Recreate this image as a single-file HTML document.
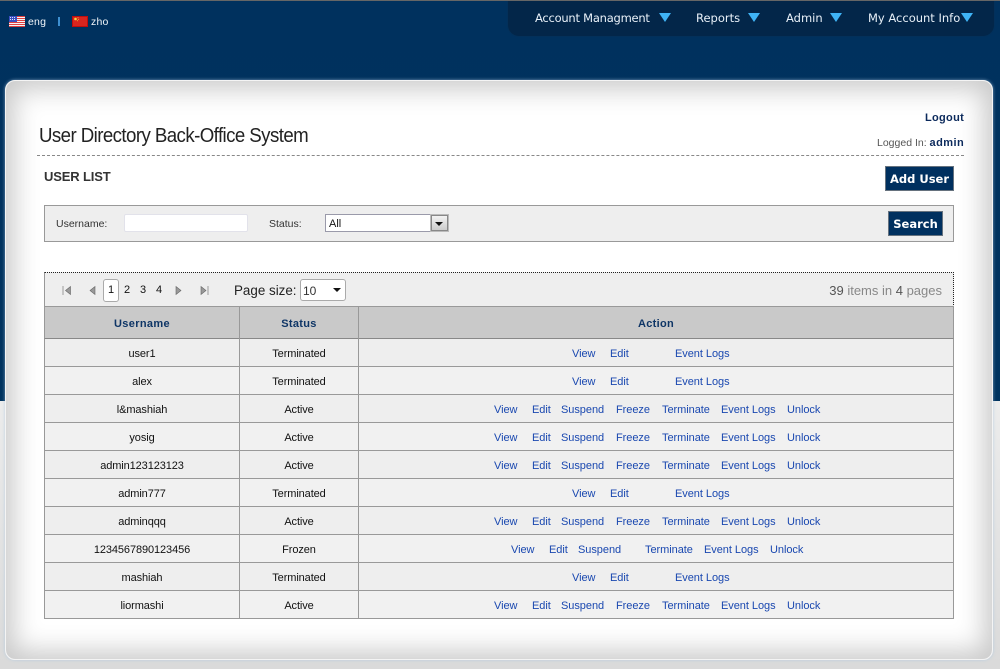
<!DOCTYPE html>
<html><head><meta charset="utf-8"><title>User List</title>
<style>
html,body{margin:0;padding:0;width:1000px;height:669px;overflow:hidden;background:#e0e0e0;font-family:"Liberation Sans",Arial,sans-serif}
*{box-sizing:border-box}
.a{position:absolute;white-space:nowrap}
#top{position:absolute;left:0;top:0;width:1000px;height:401px;background:linear-gradient(#00315e 0,#00335f 100%);border-top:1px solid #666}
#bot{position:absolute;left:0;top:401px;width:1000px;height:268px;background:linear-gradient(#ececec,#dadada)}
#nav{position:absolute;left:507px;top:1px;width:488px;height:36px;background:#032649;border-radius:0 0 12px 12px;border:1px solid #03305a;border-top:0}
.m{color:#e8f0f8;font:11.5px "DejaVu Sans",sans-serif;top:11px}
.tri{position:absolute;width:0;height:0;border-left:6px solid transparent;border-right:6px solid transparent;border-top:9px solid #3fb4f6;top:13px}
#card{position:absolute;left:5px;top:80px;width:988px;height:580px;background:#fff;border:1px solid #f4f4f4;border-radius:10px;box-shadow:0 0 3px rgba(170,200,225,.7),inset 0 0 26px 8px #c9c9c9}
.btn{position:absolute;background:#00305f;border:1px solid #66727e;color:#fff;font:bold 11.5px "DejaVu Sans",sans-serif;text-align:center}
.c{color:#111;font-size:11px;text-align:center;letter-spacing:-.1px;margin-top:2px}
.l{color:#1a48b0;font-size:11px;letter-spacing:-.05px;margin-top:2px}
.r{position:absolute;left:44px;width:910px;height:28px;border-bottom:1px solid #999;border-left:1px solid #999;border-right:1px solid #999}
.v{position:absolute;width:1px;background:#999;top:306px;height:313px}
.p{font-size:11px;color:#111;top:284px}
</style></head><body>
<div id="top"></div><div id="bot"></div>

<svg class="a" style="left:9px;top:16px" width="16" height="11" viewBox="0 0 16 11">
<rect width="16" height="11" fill="#f4f4f4"/>
<path d="M0 .5h16M0 2.500h16M0 4.500h16M0 6.500h16M0 8.500h16M0 10.500h16" stroke="#e04040" stroke-width="1"/>
<rect width="8" height="6" fill="#3a4fc0"/>
<path d="M1 1.500h6M1 3.500h6" stroke="#dfe4ff" stroke-width="1" stroke-dasharray="1 1"/>
</svg>
<div class="a" style="left:28px;top:16px;color:#f2f6fa;font-size:10.5px;letter-spacing:.2px">eng</div>
<div class="a" style="left:58px;top:17px;width:2px;height:9px;background:#3d8fd0"></div>
<svg class="a" style="left:72px;top:16px" width="16" height="11" viewBox="0 0 16 11">
<rect width="16" height="11" fill="#c00d0d"/><rect x="1" y="1" width="14" height="9" fill="#d8251f"/>
<circle cx="3.500" cy="3" r="1.300" fill="#f5d63d"/><circle cx="6" cy="1.700" r=".5" fill="#f5d63d"/><circle cx="6.600" cy="3.400" r=".5" fill="#f5d63d"/><circle cx="5.400" cy="4.800" r=".5" fill="#f5d63d"/>
</svg>
<div class="a" style="left:91px;top:16px;color:#f2f6fa;font-size:10.5px;letter-spacing:.2px">zho</div>

<div id="nav"></div>
<div class="a m" style="left:535px;letter-spacing:-.24px">Account Managment</div><div class="tri" style="left:659px"></div>
<div class="a m" style="left:696px">Reports</div><div class="tri" style="left:748px"></div>
<div class="a m" style="left:786px">Admin</div><div class="tri" style="left:830px"></div>
<div class="a m" style="left:868px">My Account Info</div><div class="tri" style="left:961px"></div>

<div id="card"></div>

<div class="a" style="left:925px;top:112px;color:#0c2a5c;font-size:11px;font-weight:bold;letter-spacing:.3px">Logout</div>
<div class="a" style="left:877px;top:137px;color:#555;font-size:10.5px">Logged In: <b style="color:#0c2a5c;font-size:11px;letter-spacing:.45px">admin</b></div>
<div class="a" style="left:39px;top:125px;color:#222;font-size:20px;letter-spacing:-.62px;transform:scaleX(.934);transform-origin:0 0">User Directory Back-Office System</div>
<div class="a" style="left:37px;top:155px;width:927px;border-top:1px dashed #888"></div>

<div class="a" style="left:44px;top:169px;color:#333;font-size:13px;font-weight:bold;letter-spacing:-.15px">USER LIST</div>
<div class="btn" style="left:885px;top:166px;width:69px;height:25px;line-height:25px">Add User</div>

<div class="a" style="left:44px;top:205px;width:910px;height:37px;background:#eee;border:1px solid #999"></div>
<div class="a" style="left:56px;top:217px;color:#333;font-size:10.5px;margin-top:1px">Username:</div>
<div class="a" style="left:124px;top:214px;width:124px;height:18px;background:#fff;border:1px solid #e2e2ea;border-radius:2px"></div>
<div class="a" style="left:269px;top:217px;color:#333;font-size:10.5px;margin-top:1px">Status:</div>
<div class="a" style="left:325px;top:214px;width:124px;height:18px;background:#fff;border:1px solid #9a9aaa"></div>
<div class="a" style="left:329px;top:218px;color:#111;font-size:11px">All</div>
<div class="a" style="left:431px;top:215px;width:17px;height:16px;background:linear-gradient(#f2f2f2,#ccc);border:1px solid #888;outline:1px solid #bbb"></div>
<div class="a" style="left:435px;top:222px;width:0;height:0;border-left:4px solid transparent;border-right:4px solid transparent;border-top:4px solid #111"></div>
<div class="btn" style="left:888px;top:211px;width:55px;height:25px;line-height:25px">Search</div>

<div class="a" style="left:44px;top:272px;width:910px;height:35px;background:#eee;border-top:1px dotted #222;border-right:1px dotted #222;border-left:1px solid #999"></div>
<svg class="a" style="left:60px;top:284px" width="160" height="13" viewBox="0 0 160 13">
<g fill="#999" stroke="#666" stroke-width=".6">
<path d="M3 2v9" fill="none"/><path d="M10.500 2.500v8L5.500 6.500z"/>
<path d="M35 2.500v8L30 6.500z"/>
<path d="M116 2.500v8l5-4z"/>
<path d="M141 2.500v8l5-4z"/><path d="M148 2v9" fill="none"/>
</g></svg>
<div class="a" style="left:103px;top:279px;width:16px;height:23px;background:#fff;border:1px solid #aaa;border-radius:3px"></div>
<div class="a p" style="left:108px">1</div>
<div class="a p" style="left:124px">2</div>
<div class="a p" style="left:140px">3</div>
<div class="a p" style="left:156px">4</div>
<div class="a" style="left:234px;top:283px;color:#222;font-size:13.4px">Page size:</div>
<div class="a" style="left:300px;top:279px;width:46px;height:22px;background:#fff;border:1px solid #aaa;border-radius:3px"></div>
<div class="a" style="left:303px;top:284px;color:#333;font-size:12px">10</div>
<div class="a" style="left:333px;top:288px;width:0;height:0;border-left:4px solid transparent;border-right:4px solid transparent;border-top:4px solid #111"></div>
<div class="a" style="right:58px;top:283px;color:#888;font-size:13px"><span style="color:#555">39</span> items in <span style="color:#555">4</span> pages</div>

<div class="a" style="left:44px;top:306px;width:910px;height:33px;background:#c9c9c9;border:1px solid #999;border-bottom-color:#888"></div>
<div class="a c" style="left:45px;width:194px;top:316px;color:#0e3566;font-weight:bold;letter-spacing:.35px">Username</div>
<div class="a c" style="left:240px;width:118px;top:316px;color:#0e3566;font-weight:bold;letter-spacing:.3px">Status</div>
<div class="a c" style="left:359px;width:594px;top:316px;color:#0e3566;font-weight:bold;letter-spacing:.3px">Action</div>

<div class="r" style="top:339px;background:#eee"></div>
<div class="r" style="top:367px;background:#f1f1f1"></div>
<div class="r" style="top:395px;background:#eee"></div>
<div class="r" style="top:423px;background:#f1f1f1"></div>
<div class="r" style="top:451px;background:#eee"></div>
<div class="r" style="top:479px;background:#f1f1f1"></div>
<div class="r" style="top:507px;background:#eee"></div>
<div class="r" style="top:535px;background:#f1f1f1"></div>
<div class="r" style="top:563px;background:#eee"></div>
<div class="r" style="top:591px;background:#f1f1f1"></div>
<div class="v" style="left:239px"></div><div class="v" style="left:358px"></div>

<div class="a c" style="left:45px;width:194px;top:346px">user1</div><div class="a c" style="left:240px;width:118px;top:346px">Terminated</div>
<div class="a l" style="left:572px;top:346px">View</div><div class="a l" style="left:610px;top:346px">Edit</div><div class="a l" style="left:675px;top:346px">Event Logs</div>

<div class="a c" style="left:45px;width:194px;top:374px">alex</div><div class="a c" style="left:240px;width:118px;top:374px">Terminated</div>
<div class="a l" style="left:572px;top:374px">View</div><div class="a l" style="left:610px;top:374px">Edit</div><div class="a l" style="left:675px;top:374px">Event Logs</div>

<div class="a c" style="left:45px;width:194px;top:402px">l&amp;mashiah</div><div class="a c" style="left:240px;width:118px;top:402px">Active</div>
<div class="a l" style="left:494px;top:402px">View</div><div class="a l" style="left:532px;top:402px">Edit</div><div class="a l" style="left:561px;top:402px">Suspend</div><div class="a l" style="left:616px;top:402px">Freeze</div><div class="a l" style="left:662px;top:402px">Terminate</div><div class="a l" style="left:721px;top:402px">Event Logs</div><div class="a l" style="left:787px;top:402px">Unlock</div>

<div class="a c" style="left:45px;width:194px;top:430px">yosig</div><div class="a c" style="left:240px;width:118px;top:430px">Active</div>
<div class="a l" style="left:494px;top:430px">View</div><div class="a l" style="left:532px;top:430px">Edit</div><div class="a l" style="left:561px;top:430px">Suspend</div><div class="a l" style="left:616px;top:430px">Freeze</div><div class="a l" style="left:662px;top:430px">Terminate</div><div class="a l" style="left:721px;top:430px">Event Logs</div><div class="a l" style="left:787px;top:430px">Unlock</div>

<div class="a c" style="left:45px;width:194px;top:458px">admin123123123</div><div class="a c" style="left:240px;width:118px;top:458px">Active</div>
<div class="a l" style="left:494px;top:458px">View</div><div class="a l" style="left:532px;top:458px">Edit</div><div class="a l" style="left:561px;top:458px">Suspend</div><div class="a l" style="left:616px;top:458px">Freeze</div><div class="a l" style="left:662px;top:458px">Terminate</div><div class="a l" style="left:721px;top:458px">Event Logs</div><div class="a l" style="left:787px;top:458px">Unlock</div>

<div class="a c" style="left:45px;width:194px;top:486px">admin777</div><div class="a c" style="left:240px;width:118px;top:486px">Terminated</div>
<div class="a l" style="left:572px;top:486px">View</div><div class="a l" style="left:610px;top:486px">Edit</div><div class="a l" style="left:675px;top:486px">Event Logs</div>

<div class="a c" style="left:45px;width:194px;top:514px">adminqqq</div><div class="a c" style="left:240px;width:118px;top:514px">Active</div>
<div class="a l" style="left:494px;top:514px">View</div><div class="a l" style="left:532px;top:514px">Edit</div><div class="a l" style="left:561px;top:514px">Suspend</div><div class="a l" style="left:616px;top:514px">Freeze</div><div class="a l" style="left:662px;top:514px">Terminate</div><div class="a l" style="left:721px;top:514px">Event Logs</div><div class="a l" style="left:787px;top:514px">Unlock</div>

<div class="a c" style="left:45px;width:194px;top:542px">1234567890123456</div><div class="a c" style="left:240px;width:118px;top:542px">Frozen</div>
<div class="a l" style="left:511px;top:542px">View</div><div class="a l" style="left:549px;top:542px">Edit</div><div class="a l" style="left:578px;top:542px">Suspend</div><div class="a l" style="left:645px;top:542px">Terminate</div><div class="a l" style="left:704px;top:542px">Event Logs</div><div class="a l" style="left:770px;top:542px">Unlock</div>

<div class="a c" style="left:45px;width:194px;top:570px">mashiah</div><div class="a c" style="left:240px;width:118px;top:570px">Terminated</div>
<div class="a l" style="left:572px;top:570px">View</div><div class="a l" style="left:610px;top:570px">Edit</div><div class="a l" style="left:675px;top:570px">Event Logs</div>

<div class="a c" style="left:45px;width:194px;top:598px">liormashi</div><div class="a c" style="left:240px;width:118px;top:598px">Active</div>
<div class="a l" style="left:494px;top:598px">View</div><div class="a l" style="left:532px;top:598px">Edit</div><div class="a l" style="left:561px;top:598px">Suspend</div><div class="a l" style="left:616px;top:598px">Freeze</div><div class="a l" style="left:662px;top:598px">Terminate</div><div class="a l" style="left:721px;top:598px">Event Logs</div><div class="a l" style="left:787px;top:598px">Unlock</div>
</body></html>
